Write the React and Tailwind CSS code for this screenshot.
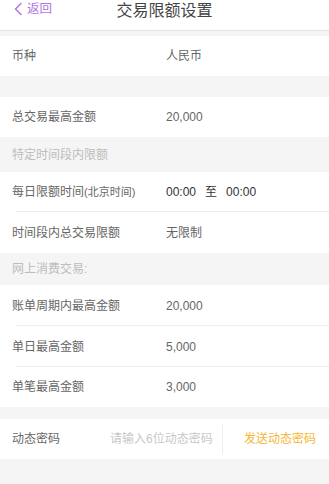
import React from "react";

const font = { fontFamily: '"Liberation Sans", "Noto Sans CJK SC", sans-serif' };

function Row({ label, value, h, sep, valueClass = "text-[#666]" }) {
  return (
    <div className={`relative flex items-center bg-white pl-[12px] ${h}`}>
      <div className="w-[154px] text-[12px] text-[#666]">{label}</div>
      <div className={`text-[12px] ${valueClass}`}>{value}</div>
      {sep && <div className="absolute bottom-0 left-[16px] right-0 h-px bg-[#eeeeee]" />}
    </div>
  );
}

function Section({ text, h }) {
  return (
    <div className={`flex items-center pl-[12px] text-[12px] text-[#bdbdbd] ${h}`}>{text}</div>
  );
}

export default function App() {
  return (
    <div className="h-[484px] w-full overflow-hidden bg-[#f5f5f5]" style={font}>
      <div className="relative h-[31px] border-b border-[#e2e2e2] bg-white">
        <div className="absolute left-[13px] top-[1px] flex items-center gap-[4px] text-[#b373e0]">
          <svg width="10" height="14" viewBox="0 0 10 14" fill="none">
            <path d="M8 1.5 L2.5 7 L8 12.5" stroke="#b373e0" strokeWidth="1.5" strokeLinecap="round" strokeLinejoin="round" />
          </svg>
          <span className="text-[12.5px] leading-[16px]">返回</span>
        </div>
        <div className="pt-[0px] text-center text-[16px] leading-[21px] text-[#444]">交易限额设置</div>
      </div>
      <div className="h-[5px]" />
      <Row label="币种" value="人民币" h="h-[40px]" />
      <div className="h-[21px]" />
      <Row label="总交易最高金额" value="20,000" h="h-[40px]" />
      <Section text="特定时间段内限额" h="h-[35px]" />
      <Row
        label={
          <span>
            每日限额时间<span className="text-[11px]">(北京时间)</span>
          </span>
        }
        value={
          <span className="flex items-center">
            <span>00:00</span>
            <span className="mx-[9px]">至</span>
            <span>00:00</span>
          </span>
        }
        valueClass="text-[#333]"
        h="h-[40px]"
        sep
      />
      <Row label="时间段内总交易限额" value="无限制" h="h-[41px]" />
      <Section text="网上消费交易:" h="h-[32px]" />
      <Row label="账单周期内最高金额" value="20,000" h="h-[41px]" sep />
      <Row label="单日最高金额" value="5,000" h="h-[41px]" sep />
      <Row label="单笔最高金额" value="3,000" h="h-[40px]" />
      <div className="h-[12px]" />
      <div className="flex h-[40px] items-center bg-white pl-[12px]">
        <div className="w-[98px] text-[12px] text-[#666]">动态密码</div>
        <div className="w-[112px] text-[12px] text-[#c8c8c8]">请输入6位动态密码</div>
        <div className="h-[30px] w-px bg-[#eeeeee]" />
        <div className="pl-[21px] text-[12px] text-[#f5b633]">发送动态密码</div>
      </div>
    </div>
  );
}
